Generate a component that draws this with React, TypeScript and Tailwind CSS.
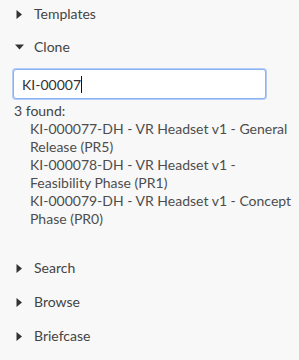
import React from "react";

const font = { fontFamily: "Lato, 'Open Sans', sans-serif" };

function Caret({ open }: { open?: boolean }) {
  return (
    <span className="w-[12px] flex justify-center shrink-0">
      {open ? (
        <svg width="9" height="6" viewBox="0 0 9 6">
          <path d="M0 0.5 L9 0.5 L4.5 5.5 Z" fill="#333" />
        </svg>
      ) : (
        <svg width="7" height="9" viewBox="0 0 7 9">
          <path d="M0.5 0 L6 4.5 L0.5 9 Z" fill="#333" />
        </svg>
      )}
    </span>
  );
}

function Header({ label, open, h }: { label: string; open?: boolean; h: string }) {
  return (
    <div className={`flex items-center gap-[9px] pl-[13px] ${h}`}>
      <Caret open={open} />
      <span className="text-[14px] leading-[18px] text-[#444]">{label}</span>
    </div>
  );
}

const results = [
  "KI-000077-DH - VR Headset v1 - General Release (PR5)",
  "KI-000078-DH - VR Headset v1 - Feasibility Phase (PR1)",
  "KI-000079-DH - VR Headset v1 - Concept Phase (PR0)",
];

export default function App() {
  return (
    <div className="w-[299px] h-[360px] bg-[#f8f8f8] overflow-hidden" style={font}>
      <Header label="Templates" h="h-[28px]" />
      <Header label="Clone" open h="h-[38px]" />
      <div className="pl-[13px] pr-[2px]">
        <div className="mt-[3px] mr-[31px] h-[30px] flex items-center bg-white border border-[#8cb2f2] rounded-[3px] ring-1 ring-[#b3cdf7] px-[8px]">
          <span className="text-[14px] text-[#333]">KI-00007</span>
          <span className="w-px h-[17px] bg-[#111]" />
        </div>
        <div className="mt-[3px] text-[14px] leading-[18px] text-[#444] pl-px">3 found:</div>
        <ul className="pl-[17px] text-[14px] leading-[18px] text-[#4d4d4d]">
          {results.map((r) => (
            <li key={r}>{r}</li>
          ))}
        </ul>
      </div>
      <div className="mt-[23px]">
        <Header label="Search" h="h-[34px]" />
        <Header label="Browse" h="h-[34px]" />
        <Header label="Briefcase" h="h-[34px]" />
      </div>
    </div>
  );
}
